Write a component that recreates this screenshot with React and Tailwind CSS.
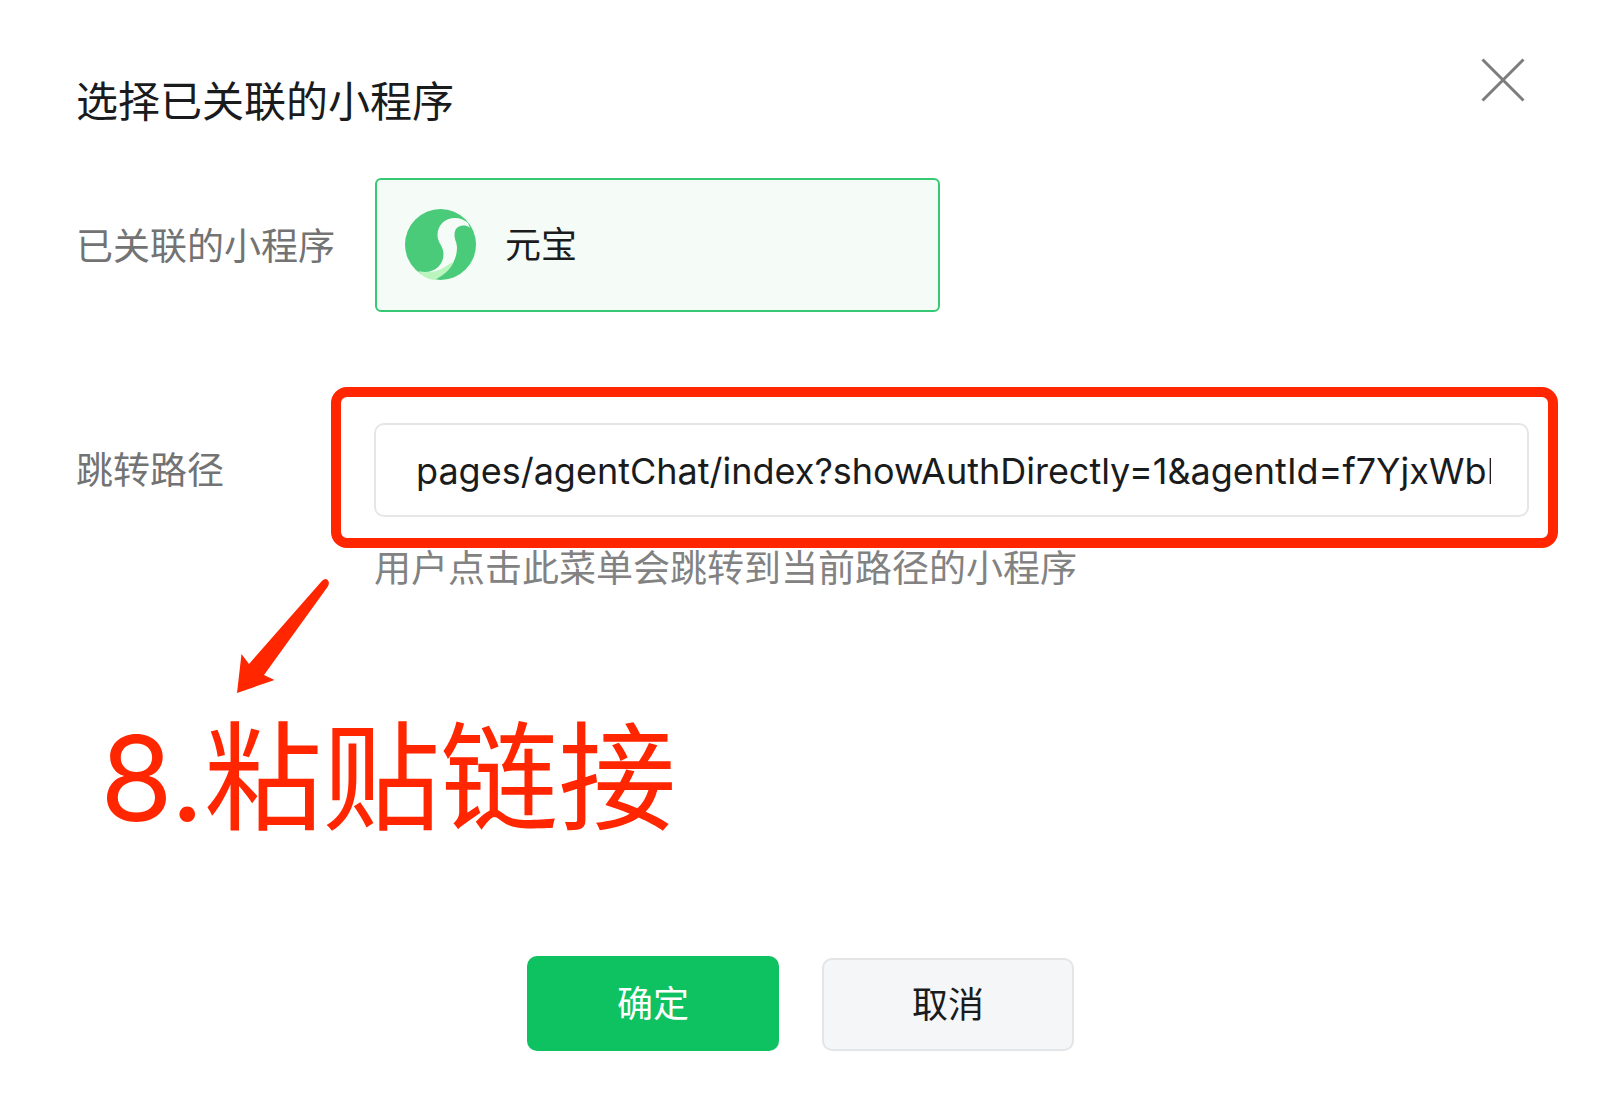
import React, { useState } from 'react';

function App() {
  const [path, setPath] = useState('pages/agentChat/index?showAuthDirectly=1&agentId=f7YjxWbNqK2x');

  return (
    <main
      role="dialog"
      aria-labelledby="dialog-title"
      className="w-full bg-white pl-19 pr-[71px] pt-[58px] pb-[58px] font-['Inter','Noto_Sans_CJK_SC',sans-serif] text-4xl text-[#1a1b1c]"
    >
      <header className="flex items-start justify-between">
        <h1 id="dialog-title" className="pt-4 text-[42px] leading-14">选择已关联的小程序</h1>
        <button type="button" aria-label="关闭" className="mr-1 cursor-pointer text-[#7d7d7d]">
          <CloseIcon />
        </button>
      </header>

      <div className="mt-12 flex items-center">
        <span id="app-label" className="w-[299px] shrink-0 pt-1 text-[37px] leading-13 text-[#737373]">已关联的小程序</span>
        <button
          type="button"
          aria-describedby="app-label"
          className="flex h-[134px] w-[565px] items-center gap-7 rounded-md border-2 border-[#35c974] bg-[#f5fbf7] pl-7 text-left"
        >
          <AppLogo />
          <span>元宝</span>
        </button>
      </div>

      <div className="mt-[111px] flex items-start">
        <label htmlFor="path" className="w-[298px] shrink-0 pt-[22px] text-[37px] leading-13 text-[#737373]">跳转路径</label>
        <div className="min-w-0 flex-1">
          <div className="relative">
            <input
              id="path"
              type="text"
              value={path}
              onChange={(e) => setPath(e.target.value)}
              className="block h-[94px] w-full rounded-[10px] border-2 border-[#e6e6e6] pt-0.5 pr-9 pl-10 outline-none"
            />
            <Highlight />
          </div>
          <p className="mt-6 text-[37px] leading-14 text-[#828282]">用户点击此菜单会跳转到当前路径的小程序</p>
        </div>
      </div>

      <Note />

      <footer className="mt-[94px] flex items-end justify-center gap-[43px] pr-1">
        <button type="button" className="h-[95px] w-[252px] rounded-[10px] bg-[#0fc261] text-white">确定</button>
        <button type="button" className="h-[93px] w-[252px] rounded-[10px] border-2 border-[#e3e5e7] bg-[#f5f6f8]">取消</button>
      </footer>
    </main>
  );
}

// red frame that sits over the field
function Highlight() {
  return (
    <div className="pointer-events-none absolute -bottom-[31px] -left-[43px] -right-[29px] -top-9 rounded-2xl border-10 border-[#ff2600]" />
  );
}

function Note() {
  return (
    <div className="text-[#ff2600]">
      <svg width="92" height="115" viewBox="0 0 92 115" fill="currentColor" aria-hidden="true" className="-mt-[18px] ml-[161px]">
        <path d="M0 114L4.500 75L12 85L84 3Q88 -2 91 1.500Q93 4 90.500 8L27 96L37.500 101Z" />
      </svg>
      <p className="ml-6 text-[118px] leading-42">8.粘贴链接</p>
    </div>
  );
}

function CloseIcon() {
  return (
    <svg width="44" height="44" viewBox="0 0 44 44" fill="none" stroke="currentColor" strokeWidth="3">
      <path d="M1.500 1.500L42.500 42.500M42.500 1.500L1.500 42.500" />
    </svg>
  );
}

function AppLogo() {
  return (
    <svg width="72" height="72" viewBox="0 0 72 72" aria-hidden="true">
      <circle cx="35.500" cy="35.500" r="35.500" fill="#4acb79" />
      <path d="M63 14C60 11 55 9 50 9C40 9 32.500 16 32.500 26C32.500 34 38.500 37 38.500 45C38.500 55 31 63 20 63L14 62.500C18 67 23 70 30 70.500C43 64 52 52 52 39C52 33 49.500 31 49.500 26C49.500 20 53 16.500 58 16.500C61 16.500 63 17 65 19Z" fill="#f5fbf7" />
      <path d="M13.500 62.500C17.500 67 23 70.500 29 70.700C38 67 45 61 49 52.500C41 56 37 63 21 63.200Q17 63.200 13.500 62.500Z" fill="#b9f5bd" />
    </svg>
  );
}

export default App;
